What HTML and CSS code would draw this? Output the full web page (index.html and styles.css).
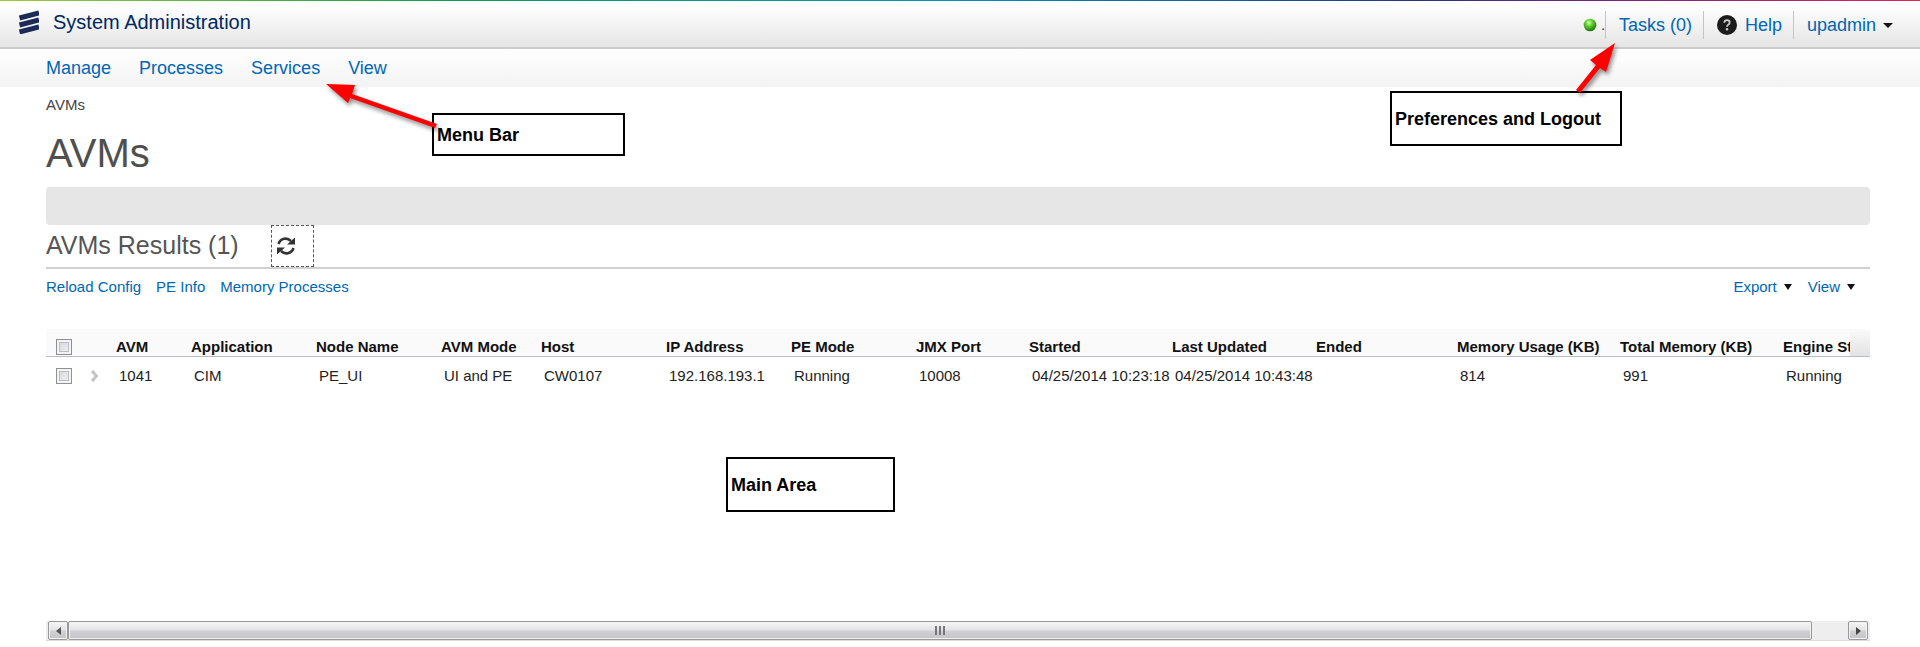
FILE: index.html
```html
<!DOCTYPE html>
<html lang="en">
<head>
<meta charset="utf-8">
<title>System Administration</title>
<link rel="stylesheet" href="styles.css">
</head>
<body>
<header class="banner">
  <div class="brand">
    <svg class="logo" width="20" height="24" viewBox="0 0 20 24" aria-hidden="true">
      <g stroke="#1b2b57" stroke-width="5" stroke-linecap="butt"><path d="M0.500 8 20 3"/><path d="M0.500 15 20 10"/><path d="M0.500 22 20 17"/></g>
    </svg>
    <span>System Administration</span>
  </div>
  <div class="tools">
    <span class="status">
      <svg width="14" height="14" viewBox="0 0 14 14" aria-hidden="true">
        <defs><radialGradient id="led" cx="42%" cy="32%" r="65%"><stop offset="0" stop-color="#d8ffc0"/><stop offset=".35" stop-color="#6fdc3a"/><stop offset="1" stop-color="#1d7a0c"/></radialGradient></defs>
        <circle cx="7" cy="7" r="6.300" fill="url(#led)"/>
      </svg>
      <span class="dot">.</span>
    </span>
    <a class="tool" href="#">Tasks (0)</a>
    <a class="tool" href="#">
      <svg width="20" height="20" viewBox="0 0 20 20" aria-hidden="true"><circle cx="10" cy="10" r="10" fill="#1c1c1c"/><path d="M7.300 7.800Q7.300 5.200 10 5.200T12.700 7.600Q12.700 9 11.200 9.700Q10 10.300 10 11.800" fill="none" stroke="#ccc" stroke-width="1.800"/><circle cx="10" cy="14.200" r="1.200" fill="#ccc"/></svg>
      Help
    </a>
    <button class="tool user" type="button">upadmin <i class="caret"></i></button>
  </div>
</header>
<nav class="menu">
  <a href="#">Manage</a><a href="#">Processes</a><a href="#">Services</a><a href="#">View</a>
</nav>
<main class="page">
  <div class="crumb">AVMs</div>
  <h1>AVMs</h1>
  <div class="strip"></div>
  <div class="results">
    <h2>AVMs Results (1)</h2>
    <button class="refresh" type="button" aria-label="Refresh">
      <svg width="18" height="18" viewBox="0 0 18 18" aria-hidden="true"><g fill="none" stroke="#333" stroke-width="2.600"><path d="M1.500 7C3.500 1 10 .2 14 4"/><path d="M16.500 11C14.500 17 8 17.800 4 14"/></g><path d="M18 .5V7.500H10ZM0 17.500V10.500H8Z" fill="#333"/></svg>
    </button>
  </div>
  <div class="actions">
    <a href="#">Reload Config</a><a href="#">PE Info</a><a href="#">Memory Processes</a>
    <span class="options"><button type="button">Export <i class="caret"></i></button><button type="button">View <i class="caret"></i></button></span>
  </div>
  <div class="grid">
    <div class="viewport">
      <table>
        <colgroup><col class="w-check"><col class="w-open"><col class="w-avm"><col class="w-node"><col class="w-node"><col class="w-mode"><col class="w-node"><col class="w-node"><col class="w-node"><col class="w-port"><col class="w-started"><col class="w-updated"><col class="w-ended"><col class="w-memory"><col class="w-memory"><col class="w-engine"></colgroup>
        <thead><tr><th><input type="checkbox" aria-label="Select all"></th><th></th><th>AVM</th><th>Application</th><th>Node Name</th><th>AVM Mode</th><th>Host</th><th>IP Address</th><th>PE Mode</th><th>JMX Port</th><th>Started</th><th>Last Updated</th><th>Ended</th><th>Memory Usage (KB)</th><th>Total Memory (KB)</th><th>Engine Status</th></tr></thead>
        <tbody><tr><td><input type="checkbox" aria-label="Select 1041"></td><td><svg width="8" height="12" viewBox="0 0 8 12" aria-hidden="true"><path d="M1 1 5.500 6 1 11" fill="none" stroke="#c4c4c4" stroke-width="3"/></svg></td><td>1041</td><td>CIM</td><td>PE_UI</td><td>UI and PE</td><td>CW0107</td><td>192.168.193.1</td><td>Running</td><td>10008</td><td>04/25/2014 10:23:18</td><td>04/25/2014 10:43:48</td><td></td><td>814</td><td>991</td><td>Running</td></tr></tbody>
      </table>
    </div>
    <div class="corner"></div>
  </div>
  <div class="scroll">
    <button type="button" aria-label="Scroll left"><svg width="5" height="8" viewBox="0 0 5 8"><path d="M5 0V8L0 4Z" fill="#555"/></svg></button>
    <div class="track"><div class="thumb"><i></i><i></i><i></i></div></div>
    <button type="button" aria-label="Scroll right"><svg width="5" height="8" viewBox="0 0 5 8"><path d="M0 0V8L5 4Z" fill="#444"/></svg></button>
  </div>
</main>
<div class="note note-menu">Menu Bar</div>
<div class="note note-prefs">Preferences and Logout</div>
<div class="note note-main">Main Area</div>
<svg class="arrow arrow-menu" width="120" height="55" viewBox="0 0 120 55" aria-hidden="true"><path d="M0 4 29 5 26 14 111 44 109 48 24 18 22 23Z" fill="#f00"/></svg>
<svg class="arrow arrow-prefs" width="50" height="60" viewBox="0 0 50 60" aria-hidden="true"><path d="M40 3 15 20 21 25 1 50 5 53 25 28 31 32Z" fill="#f00"/></svg>
</body>
</html>
```
FILE: styles.css
```css
* { box-sizing: border-box; }
body { margin: 0; position: relative; min-height: 100vh; background: #fff; color: #222; font: 15px/20px "Liberation Sans", Arial, sans-serif; }
a { color: #0066b3; text-decoration: none; }
button { margin: 0; padding: 0; border: 0; background: none; color: #0066b3; font: inherit; }
svg { display: block; }
.banner { display: flex; justify-content: space-between; height: 49px; padding-top: 1px; border-bottom: 2px solid #ccc; background: linear-gradient(90deg, #a0c93c, #089c54 24%, #009c8c 37%, #0090bc 50%, #2a3282 74%, #8c2378 87%, #e8205c) top / 100% 1px no-repeat, linear-gradient(#fff 10%, #e5e5e5); }
.brand { display: flex; align-items: flex-start; gap: 14px; padding: 9px 0 0 19px; color: #00285f; font-size: 20px; line-height: 24px; }
.tools { display: flex; align-items: flex-start; padding: 10px 27px 0 0; font-size: 18px; line-height: 28px; }
.status { display: flex; align-items: center; gap: 4px; height: 28px; }
.dot { width: 4px; color: #333; font-size: 15px; }
.tool { display: flex; align-items: center; gap: 8px; height: 28px; padding: 0 11px 0 13px; border-left: 1px solid #c4c4c4; }
.user { gap: 7px; padding-right: 0; }
.caret { display: inline-block; border: 5px solid transparent; border-top-color: #111; border-bottom: 0; }
.menu { display: flex; gap: 28px; padding: 9px 46px; background: linear-gradient(#fff, #f3f3f3); font-size: 18px; }
.page { padding: 8px 50px 0 46px; }
.crumb { color: #444; }
h1 { margin: 14px 0 10px; color: #4f4f4f; font-weight: 400; font-size: 40px; line-height: 48px; }
.strip { height: 38px; border-radius: 4px; background: #e6e6e6; }
.results { display: flex; gap: 32px; border-bottom: 2px solid #d0d0d0; }
h2 { margin: 0; color: #555; font-weight: 400; font-size: 25px; line-height: 40px; }
.refresh { width: 43px; height: 42px; padding-left: 5px; border: 1px dashed #555; }
.actions { display: flex; align-items: center; gap: 15px; padding-top: 8px; }
.options { display: flex; gap: 16px; margin-left: auto; padding-right: 15px; }
.options button { display: flex; align-items: center; gap: 7px; }
.options .caret { border-width: 6px 4px 0; }
.grid { display: flex; height: 292px; margin-top: 32px; }
.viewport { flex: 1; min-width: 0; overflow: hidden; }
.corner { width: 20px; height: 28px; border-bottom: 1px solid #b4bccc; background: linear-gradient(#fafafa, #e2e2e2); }
table { width: 100%; border-spacing: 0; table-layout: fixed; }
th, td { padding: 0; text-align: left; white-space: nowrap; }
th { height: 28px; padding-top: 8px; border-bottom: 1px solid #b4bccc; background: #fafafa; color: #111; line-height: 19px; }
td { height: 38px; padding-left: 3px; }
th:first-child, td:first-child { padding-left: 10px; }
input { display: block; appearance: none; width: 16px; height: 16px; margin: 0; border: 1px solid #8e8f8f; background: linear-gradient(135deg, #cfd1d5, #f6f6f6); box-shadow: inset 0 0 0 2px #f4f4f4, inset 0 0 0 3px #b9bcc4; }
.w-check { width: 42px; }
.w-open { width: 28px; }
.w-avm { width: 75px; }
.w-node { width: 125px; }
.w-mode { width: 100px; }
.w-port { width: 113px; }
.w-started { width: 143px; }
.w-updated { width: 144px; }
.w-ended { width: 141px; }
.w-memory { width: 163px; }
.w-engine { width: 125px; }
.scroll { display: flex; height: 20px; padding: 0 2px; border-bottom: 1px solid #ddd; background: #eee; }
.scroll button, .thumb { border: 1px solid #999; border-radius: 2px; background: linear-gradient(#f6f6f6, #e4e4e6 45%, #d0d0d3 55%, #c4c4c8); box-shadow: inset 0 0 0 1px #f2f2f2; }
.scroll button { display: grid; place-items: center; width: 20px; }
.track { flex: 1; }
.thumb { display: flex; justify-content: center; align-items: center; gap: 2px; width: 98%; height: 19px; }
.thumb i { width: 2px; height: 9px; background: #777; }
.note { position: absolute; display: flex; align-items: center; padding-left: 3px; border: 2px solid #000; background: #fff; color: #000; font-weight: 700; font-size: 18px; }
.note-menu { left: 432px; top: 113px; width: 193px; height: 43px; }
.note-prefs { right: 298px; top: 91px; width: 232px; height: 55px; }
.note-main { left: 726px; top: 457px; width: 169px; height: 55px; }
.arrow { position: absolute; filter: drop-shadow(2px 3px 2px rgba(0, 0, 0, .45)); }
.arrow-menu { left: 326px; top: 80px; }
.arrow-prefs { right: 295px; top: 40px; }
```
